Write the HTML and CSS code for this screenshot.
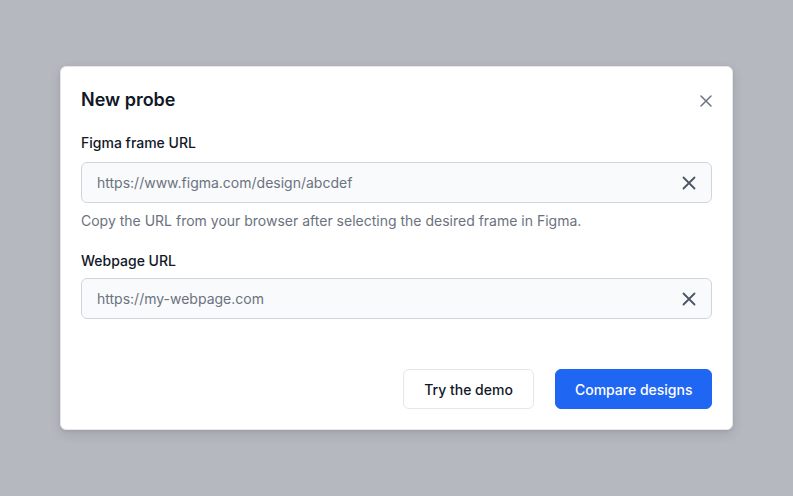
FILE: index.html
```html
<!DOCTYPE html>
<html lang="en">
<head>
<meta charset="utf-8">
<title>New probe</title>
<link rel="stylesheet" href="styles.css">
</head>
<body>
<div class="overlay">
  <div class="modal">
    <div class="modal-header">
      <h2 class="modal-title">New probe</h2>
      <button class="close-btn" aria-label="Close">
        <svg width="12" height="12" viewBox="0 0 12 12"><path d="M1 1L11 11M11 1L1 11" stroke="#6b7280" stroke-width="1.5" stroke-linecap="round"/></svg>
      </button>
    </div>
    <div class="field">
      <label class="label">Figma frame URL</label>
      <div class="input">
        <span class="placeholder">https://www.figma.com/design/abcdef</span>
        <svg class="clear" width="14" height="14" viewBox="0 0 14 14"><path d="M1.5 1.5L12.5 12.5M12.5 1.5L1.5 12.5" stroke="#4b5563" stroke-width="1.8" stroke-linecap="round"/></svg>
      </div>
      <p class="help">Copy the URL from your browser after selecting the desired frame in Figma.</p>
    </div>
    <div class="field field-second">
      <label class="label label-tight">Webpage URL</label>
      <div class="input">
        <span class="placeholder">https://my-webpage.com</span>
        <svg class="clear" width="14" height="14" viewBox="0 0 14 14"><path d="M1.5 1.5L12.5 12.5M12.5 1.5L1.5 12.5" stroke="#4b5563" stroke-width="1.8" stroke-linecap="round"/></svg>
      </div>
    </div>
    <div class="actions">
      <button class="btn btn-secondary">Try the demo</button>
      <button class="btn btn-primary">Compare designs</button>
    </div>
  </div>
</div>
</body>
</html>
```
FILE: styles.css
```css
* { box-sizing: border-box; }
html, body { margin: 0; padding: 0; }
body {
  font-family: Inter, "Noto Sans", sans-serif;
  background: #b6b8bf;
  color: #111827;
}
.overlay {
  width: 100vw;
  height: 100vh;
  display: flex;
  align-items: center;
  justify-content: center;
}
.modal {
  width: 673px;
  background: #ffffff;
  border: 1px solid #e5e7eb;
  border-radius: 6px;
  padding: 19px 20px 20px;
  box-shadow: 0 4px 12px rgba(17, 24, 39, 0.12), 0 1px 3px rgba(17, 24, 39, 0.08);
}
.modal-header {
  display: flex;
  align-items: center;
  justify-content: space-between;
  height: 28px;
  margin-bottom: 19px;
}
.modal-title {
  margin: 0;
  font-size: 18px;
  line-height: 28px;
  font-weight: 600;
  color: #111827;
}
.close-btn {
  border: 0;
  background: none;
  padding: 0;
  width: 12px;
  height: 12px;
  display: flex;
  margin-top: 1px;
  cursor: pointer;
}
.field { display: flex; flex-direction: column; }
.field-second { margin-top: 20px; }
.label {
  font-size: 14px;
  line-height: 20px;
  font-weight: 500;
  color: #111827;
  margin-bottom: 9px;
}
.label-tight { margin-bottom: 7px; }
.input {
  height: 41px;
  display: flex;
  align-items: center;
  justify-content: space-between;
  border: 1px solid #d1d5db;
  border-radius: 6px;
  background: #f9fafb;
  padding: 0 15px 0 15px;
}
.placeholder {
  font-size: 14px;
  color: #6b7280;
}
.clear { flex: none; }
.help {
  margin: 8px 0 0;
  font-size: 14px;
  line-height: 20px;
  color: #6b7280;
}
.actions {
  margin-top: 50px;
  display: flex;
  justify-content: flex-end;
  gap: 21px;
}
.btn {
  height: 40px;
  border-radius: 6px;
  padding: 0 20px;
  font-family: Inter, "Noto Sans", sans-serif;
  font-size: 14px;
  font-weight: 500;
  cursor: pointer;
}
.btn-secondary {
  background: #ffffff;
  border: 1px solid #e5e7eb;
  color: #111827;
  padding: 0 20.5px;
}
.btn-primary {
  background: #1f66f2;
  border: 1px solid #1f66f2;
  color: #ffffff;
  padding: 0 18.5px;
}
```
